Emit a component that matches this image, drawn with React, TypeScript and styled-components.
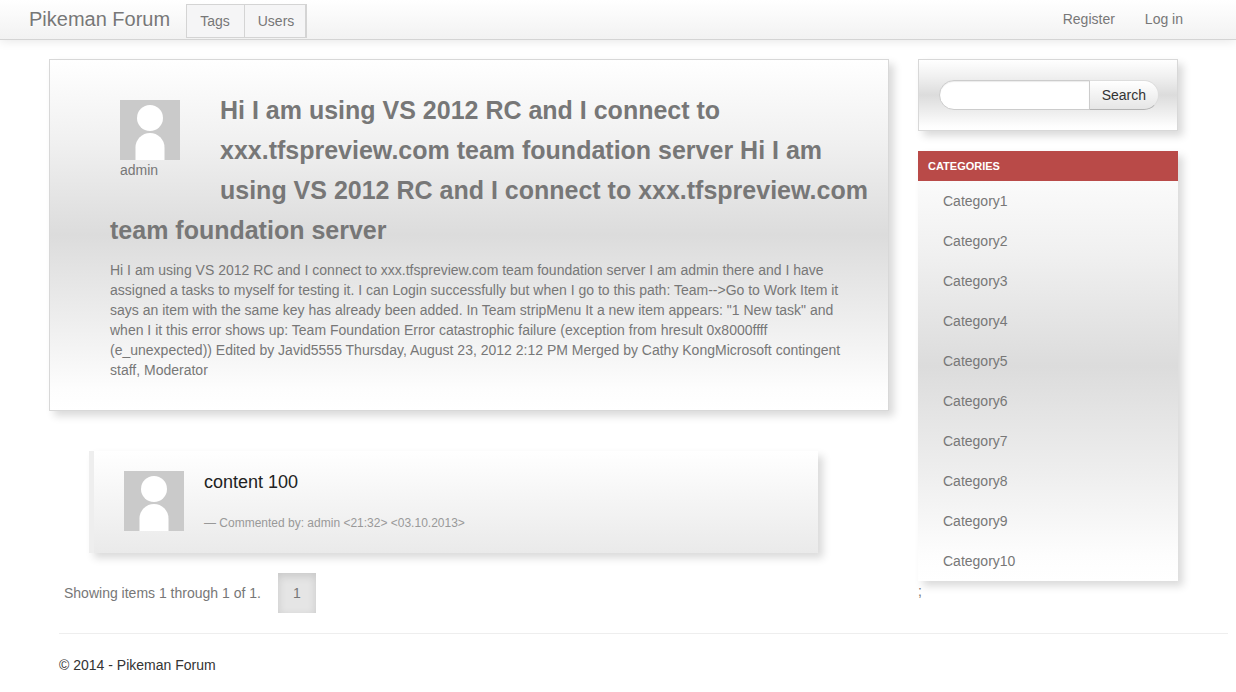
import React from "react";
import styled, { createGlobalStyle, css } from "styled-components";

const Global = createGlobalStyle`
  * { box-sizing: border-box; }
  body {
    margin: 0;
    background: #fff;
    color: #333;
    font: 14px/20px "Liberation Sans", Arial, sans-serif;
  }
  a { color: inherit; text-decoration: none; }
  p, h1, h2, ul, figure, blockquote { margin: 0; padding: 0; }
  ul { list-style: none; }
`;

const shadow = "5px 5px 8px rgba(0, 0, 0, 0.15)";

const sheen = css`
  background: linear-gradient(#fff 0%, #f0f0f0 24%, #dcdcdc 50%, #efefef 76%, #fdfdfd 94%, #fff 100%);
  box-shadow: ${shadow};
`;

const Navbar = styled.header`
  display: flex;
  align-items: flex-start;
  height: 40px;
  padding: 0 38px 0 29px;
  color: #777;
  background: linear-gradient(#fff, #f2f2f2);
  border-bottom: 1px solid #d4d4d4;
  box-shadow: 0 1px 10px rgba(0, 0, 0, 0.1);
`;

const Brand = styled.a`
  margin-right: 16px;
  font-size: 20px;
  line-height: 38px;
  text-shadow: 0 1px 0 #fff;
`;

const TabGroup = styled.nav`
  display: flex;
  margin-top: 4px;
  border: 1px solid #d4d4d4;
  border-right-width: 2px;
`;

const Tab = styled.a`
  padding: 0 14px 0 13px;
  line-height: 32px;
  background: #f5f5f6;
  & + & {
    border-left: 1px solid #d4d4d4;
    padding-right: 11px;
  }
`;

const Account = styled.nav`
  display: flex;
  margin-left: auto;
`;

const AccountLink = styled.a`
  padding: 0 15px;
  line-height: 38px;
`;

const Columns = styled.div`
  display: flex;
  gap: 29px;
  padding: 19px 58px 0 49px;
  color: #777;
`;

const Main = styled.main`
  flex: 1;
  min-width: 0;
`;

const Sidebar = styled.aside`
  flex: none;
  width: 260px;
`;

const Post = styled.article`
  padding: 30px 20px 30px 60px;
  border: 1px solid #d8d8d8;
  ${sheen}
`;

const Author = styled.figure`
  float: left;
  margin: 10px 40px 10px 10px;
  width: 60px;
`;

const AvatarImage = styled.svg`
  display: block;
  flex: none;
  width: 60px;
  height: 60px;
`;

const PostTitle = styled.h1`
  margin-bottom: 10px;
  font-size: 25px;
  line-height: 40px;
`;

const Comment = styled.blockquote`
  display: flex;
  gap: 20px;
  margin: 40px 71px 20px 40px;
  padding: 20px 30px;
  border-left: 5px solid #eee;
  background: linear-gradient(#fff, #eaeaea);
  box-shadow: ${shadow};
`;

const CommentText = styled.p`
  margin-bottom: 20px;
  font-size: 18px;
  line-height: 22px;
  color: #222;
`;

const CommentMeta = styled.small`
  display: block;
  font-size: 12px;
  color: #999;
`;

const Pager = styled.nav`
  display: flex;
  gap: 17px;
  padding-left: 15px;
  line-height: 40px;
`;

const PageLink = styled.a`
  width: 38px;
  text-align: center;
  background: #e5e5e5;
  box-shadow: inset 0 3px 8px rgba(0, 0, 0, 0.13);
`;

const SearchForm = styled.form`
  display: flex;
  padding: 20px 18px 20px 20px;
  border: 1px solid #d8d8d8;
  ${sheen}
`;

const SearchInput = styled.input`
  flex: 1;
  min-width: 0;
  height: 30px;
  padding: 4px 14px;
  font: inherit;
  background: #fff;
  border: 1px solid #ccc;
  border-radius: 15px 0 0 15px;
  box-shadow: inset 0 1px 1px rgba(0, 0, 0, 0.08);
`;

const SearchButton = styled.button`
  height: 30px;
  margin-left: -1px;
  padding: 0 12px;
  font: inherit;
  color: #333;
  background: linear-gradient(#fff, #e6e6e6);
  border: 1px solid #ccc;
  border-color: #ddd #ddd #b3b3b3 #ccc;
  border-radius: 0 15px 15px 0;
`;

const Categories = styled.section`
  margin-top: 20px;
  ${sheen}
`;

const CategoriesTitle = styled.h2`
  padding-left: 10px;
  font-size: 11px;
  line-height: 30px;
  color: #fff;
  text-transform: uppercase;
  background: #b94a48;
`;

const CategoryLink = styled.a`
  display: block;
  padding-left: 25px;
  line-height: 40px;
`;

const Footer = styled.footer`
  margin: 20px 8px 0 59px;
  padding-top: 21px;
  border-top: 1px solid #eee;
`;

const categories = Array.from({ length: 10 }, (_, i) => `Category${i + 1}`);

const question =
  "Hi I am using VS 2012 RC and I connect to xxx.tfspreview.com team foundation server";

function Avatar() {
  return (
    <AvatarImage viewBox="0 0 60 60" role="img" aria-label="admin">
      <rect width="60" height="60" fill="#cacaca" />
      <circle cx="30" cy="18" r="13" fill="#fff" />
      <path d="M15.500 60V47.500a14.500 14.500 0 0 1 29 0V60z" fill="#fff" />
    </AvatarImage>
  );
}

export default function App() {
  return (
    <>
      <Global />
      <Navbar>
        <Brand href="#">Pikeman Forum</Brand>
        <TabGroup>
          <Tab href="#tags">Tags</Tab>
          <Tab href="#users">Users</Tab>
        </TabGroup>
        <Account>
          <AccountLink href="#register">Register</AccountLink>
          <AccountLink href="#login">Log in</AccountLink>
        </Account>
      </Navbar>
      <Columns>
        <Main>
          <Post>
            <Author>
              <Avatar />
              <figcaption>admin</figcaption>
            </Author>
            <PostTitle>
              {question} {question}
            </PostTitle>
            <p>
              {question} I am admin there and I have assigned a tasks to myself for testing it. I
              can Login successfully but when I go to this path: Team--&gt;Go to Work Item it says
              an item with the same key has already been added. In Team stripMenu It a new item
              appears: "1 New task" and when I it this error shows up: Team Foundation Error
              catastrophic failure (exception from hresult 0x8000ffff (e_unexpected)) Edited by
              Javid5555 Thursday, August 23, 2012 2:12 PM Merged by Cathy KongMicrosoft contingent
              staff, Moderator
            </p>
          </Post>
          <Comment>
            <Avatar />
            <div>
              <CommentText>content 100</CommentText>
              <CommentMeta>— Commented by: admin &lt;21:32&gt; &lt;03.10.2013&gt;</CommentMeta>
            </div>
          </Comment>
          <Pager>
            <span>Showing items 1 through 1 of 1.</span>
            <PageLink href="#page-1">1</PageLink>
          </Pager>
        </Main>
        <Sidebar>
          <SearchForm>
            <SearchInput type="text" aria-label="Search" />
            <SearchButton type="button">Search</SearchButton>
          </SearchForm>
          <Categories>
            <CategoriesTitle>Categories</CategoriesTitle>
            <ul>
              {categories.map((name) => (
                <li key={name}>
                  <CategoryLink href={`#${name}`}>{name}</CategoryLink>
                </li>
              ))}
            </ul>
          </Categories>
          ;
        </Sidebar>
      </Columns>
      <Footer>© 2014 - Pikeman Forum</Footer>
    </>
  );
}
